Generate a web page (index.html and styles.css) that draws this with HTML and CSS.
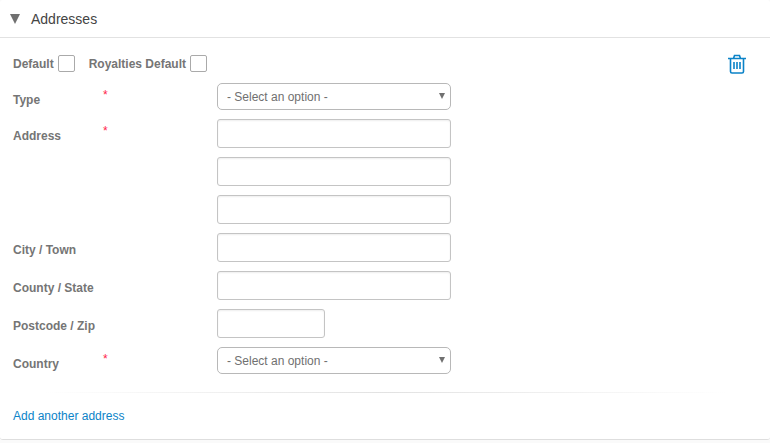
FILE: index.html
```html
<!DOCTYPE html>
<html lang="en">
<head>
  <meta charset="UTF-8" />
  <meta name="viewport" content="width=device-width, initial-scale=1.0"/>
  <title>Addresses</title>
  <link rel="stylesheet" href="styles.css">
</head>
<body>
  <section class="panel">
    <h2 class="panel-title">
      <button type="button" class="toggle" aria-expanded="true">
        <svg class="arrow" viewBox="0 0 10 10" aria-hidden="true"><path d="M0 0h10L5 10z"/></svg>
        Addresses
      </button>
    </h2>

    <form class="address-form">
      <div class="options">
        <label class="check" for="default">Default <input type="checkbox" id="default"></label>
        <label class="check" for="royalties">Royalties Default <input type="checkbox" id="royalties"></label>
        <button type="button" class="delete-btn" aria-label="Delete address">
          <svg viewBox="0 0 18 20" aria-hidden="true">
            <path d="M0 4.500h18M5.500 4.500L6.500 1.500h5L12.500 4.500M2.500 4.500v13q0 1.500 1.500 1.500h10q1.500 0 1.500-1.500v-13M6 8v7M9 8v7M12 8v7"/>
          </svg>
        </button>
      </div>

      <div class="field">
        <label for="type">Type</label>
        <span class="required">*</span>
        <div class="select-wrap">
          <select id="type" required>
            <option>- Select an option -</option>
          </select>
        </div>
      </div>
      <div class="field">
        <label for="address1">Address</label>
        <span class="required">*</span>
        <div class="lines">
          <input type="text" id="address1" required>
          <input type="text" id="address2" aria-label="Address line 2">
          <input type="text" id="address3" aria-label="Address line 3">
        </div>
      </div>
      <div class="field">
        <label for="city">City / Town</label>
        <span></span>
        <input type="text" id="city">
      </div>
      <div class="field">
        <label for="county">County / State</label>
        <span></span>
        <input type="text" id="county">
      </div>
      <div class="field">
        <label for="postcode">Postcode / Zip</label>
        <span></span>
        <input type="text" id="postcode" class="short">
      </div>
      <div class="field">
        <label for="country">Country</label>
        <span class="required">*</span>
        <div class="select-wrap">
          <select id="country" required>
            <option>- Select an option -</option>
          </select>
        </div>
      </div>

      <hr class="divider">
      <a href="#" class="add-link">Add another address</a>
    </form>
  </section>
</body>
</html>
```

FILE: styles.css
```css
* {
  box-sizing: border-box;
}

body {
  margin: 0;
  background: #fafafa;
  color: #757575;
  font-family: "Liberation Sans", Arial, sans-serif;
  font-size: 12px;
  line-height: 18px;
}

.panel {
  background: #fff;
  border-bottom: 1px solid #dedede;
  border-radius: 3px;
}

.panel-title {
  margin: 0;
  border-bottom: 1px solid #e2e2e2;
}

.toggle {
  display: flex;
  align-items: center;
  gap: 11px;
  width: 100%;
  height: 37px;
  padding: 0 10px;
  border: none;
  background: none;
  color: #444;
  font-family: inherit;
  font-size: 14px;
  cursor: pointer;
}

.arrow {
  width: 10px;
  height: 10px;
  fill: #707070;
}

.address-form {
  padding: 16px 13px 14px;
}

.options {
  display: flex;
  align-items: center;
  gap: 14px;
  margin-bottom: 9px;
}

.check {
  display: flex;
  align-items: center;
  gap: 4px;
  font-weight: bold;
}

.check input {
  appearance: none;
  width: 17px;
  height: 17px;
  margin: 0 0 2px;
  border: 1px solid #aaa;
  border-radius: 2px;
  background: #fff;
}

.check input:checked {
  background: #0b83c8;
}

.delete-btn {
  display: flex;
  margin-left: auto;
  margin-right: 11px;
  padding: 0;
  border: none;
  background: none;
  cursor: pointer;
}

.delete-btn svg {
  width: 18px;
  height: 20px;
  fill: none;
  stroke: #0b83c8;
  stroke-width: 1.6;
}

.field {
  display: grid;
  grid-template-columns: 90px 114px minmax(0, 234px);
  align-items: start;
  margin-bottom: 9px;
}

.field label {
  padding-top: 8px;
  font-weight: bold;
}

.required {
  padding-top: 3px;
  color: #ff1f4b;
}

.lines {
  display: grid;
  gap: 9px;
}

.field input,
.field select {
  display: block;
  width: 100%;
  height: 29px;
  padding: 0 9px;
  border: 1px solid #c4c4c4;
  border-radius: 3px;
  background: #fff;
  color: #707070;
  font-family: inherit;
  font-size: 12px;
}

.field input {
  box-shadow: inset 0 1px 2px #eee;
}

.field .short {
  width: 108px;
}

.field select {
  appearance: none;
  height: 27px;
  border-color: #b8b8b8;
  border-radius: 5px;
}

.select-wrap {
  position: relative;
}

.select-wrap::after {
  content: "";
  position: absolute;
  top: 10px;
  right: 6px;
  border: 3px solid transparent;
  border-top: 6px solid #707070;
  border-bottom: none;
  pointer-events: none;
}

.divider {
  height: 1px;
  margin: 18px 0 14px;
  border: none;
  background: linear-gradient(to right, transparent 4%, #e2e2e2 50%, transparent 96%);
}

.add-link {
  display: block;
  color: #0b83c8;
  text-decoration: none;
}

.add-link:hover {
  text-decoration: underline;
}
```
